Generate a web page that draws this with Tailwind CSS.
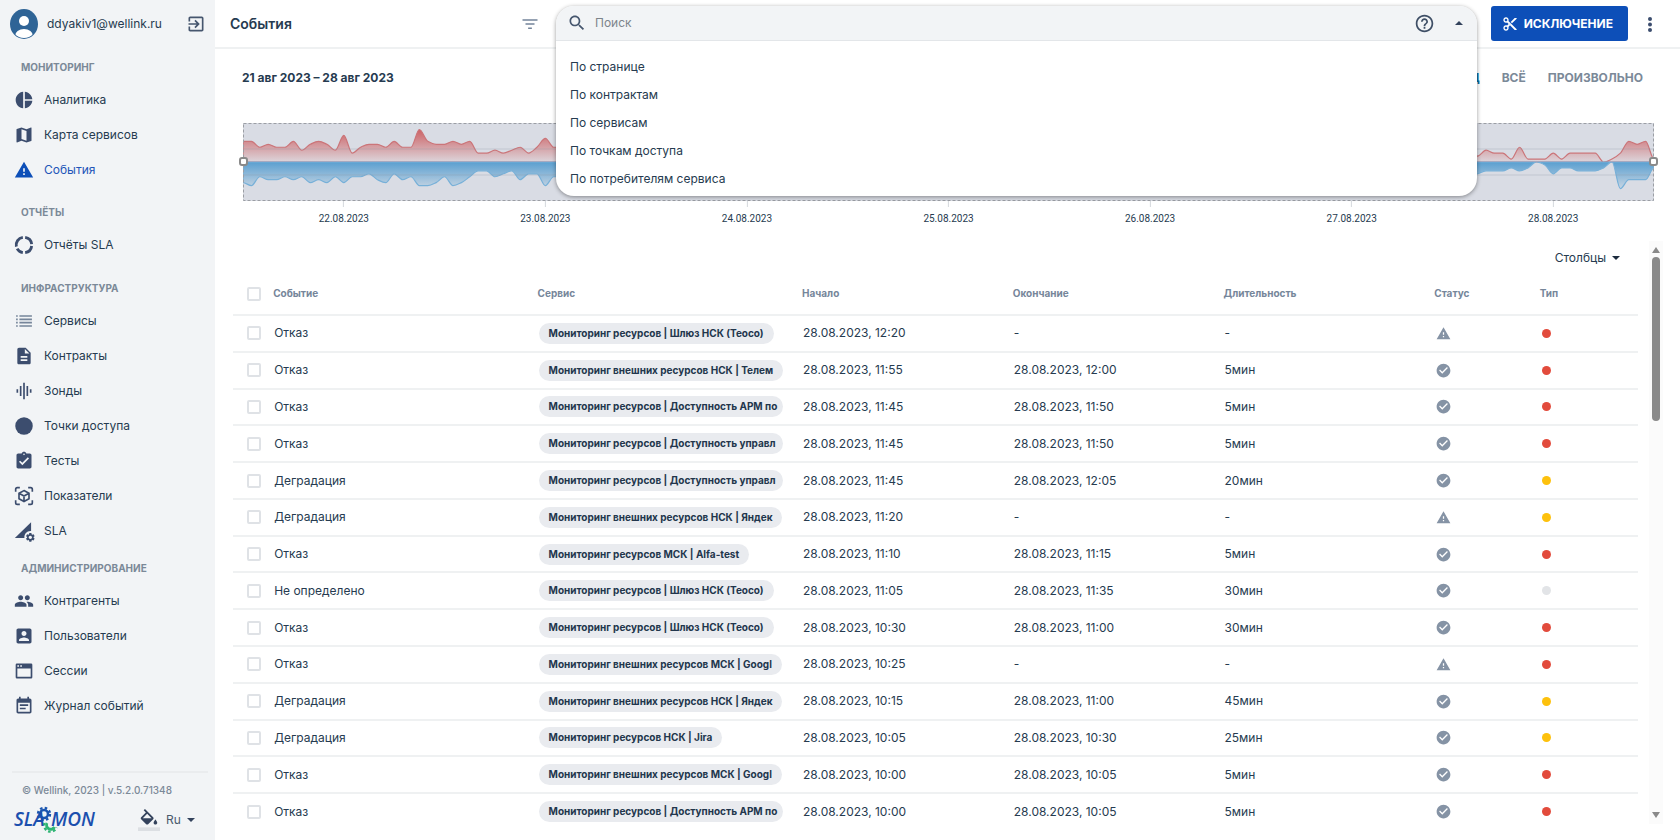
<!DOCTYPE html>
<html lang="ru">
<head>
    <meta charset="UTF-8">
    <meta name="viewport" content="width=device-width, initial-scale=1.0">
    <title>События</title>
    <script src="https://cdn.jsdelivr.net/npm/@tailwindcss/browser@4"></script>
</head>
<body class="bg-white text-[#263b50] text-xs font-['Inter','Noto_Sans',sans-serif]">

    <div class="flex h-screen overflow-hidden">

        <!-- Sidebar -->
        <aside class="w-[215px] shrink-0 bg-[#f2f4f6] flex flex-col">
            <div class="flex items-center h-12 pl-2.5 pr-[9px]">
                <svg class="w-7 h-[30px]" viewBox="0 0 28 30">
                    <defs><clipPath id="avatar"><ellipse cx="14" cy="15" rx="13" ry="14"/></clipPath></defs>
                    <ellipse cx="14" cy="15" rx="14" ry="15" fill="#2f6496"/>
                    <circle cx="14" cy="12" r="5" fill="#fff"/>
                    <ellipse cx="14" cy="27" rx="9" ry="7" fill="#fff" clip-path="url(#avatar)"/>
                </svg>
                <span class="ml-[9px]">ddyakiv1@wellink.ru</span>
                <button type="button" class="ml-auto" aria-label="Выйти">
                    <svg class="w-5 h-5 fill-[#46566e]" viewBox="0 0 24 24"><path d="M10.09 15.59L11.5 17l5-5-5-5-1.41 1.41L12.67 11H3v2h9.67l-2.58 2.59zM19 3H5c-1.11 0-2 .9-2 2v4h2V5h14v14H5v-4H3v4c0 1.1.89 2 2 2h14c1.1 0 2-.9 2-2V5c0-1.1-.9-2-2-2z"/></svg>
                </button>
            </div>

            <nav class="flex-1 pt-0.5">
                <h2 class="h-8 pt-[3px] flex items-center pl-[21px] text-[10px] font-bold text-[#7b8998]">МОНИТОРИНГ</h2>
                <a href="#" class="flex items-center gap-2.5 h-[35px] pl-3.5">
                    <svg class="w-5 h-5 fill-[#3c4d6e]" viewBox="0 0 24 24"><path d="M11 2v20c-5.07-.5-9-4.79-9-10s3.93-9.5 9-10zm2.03 0v8.99H22c-.47-4.74-4.24-8.52-8.97-8.99zm0 11.01V22c4.74-.47 8.5-4.25 8.97-8.99h-8.97z"/></svg>
                    Аналитика
                </a>
                <a href="#" class="flex items-center gap-2.5 h-[35px] pl-3.5">
                    <svg class="w-5 h-5 fill-[#3c4d6e]" viewBox="0 0 24 24"><path d="M20.5 3l-.16.03L15 5.1 9 3 3.36 4.9c-.21.07-.36.25-.36.48V20.5c0 .28.22.5.5.5l.16-.03L9 18.9l6 2.1 5.64-1.9c.21-.07.36-.25.36-.48V3.5c0-.28-.22-.5-.5-.5zM15 19l-6-2.11V5l6 2.11V19z"/></svg>
                    Карта сервисов
                </a>
                <a href="#" class="flex items-center gap-2.5 h-[35px] pl-3.5 text-[#2254b8]">
                    <svg class="w-5 h-5 fill-[#0d4fb8]" viewBox="0 0 24 24"><path d="M1 21h22L12 2 1 21zm12-3h-2v-2h2v2zm0-4h-2v-4h2v4z"/></svg>
                    События
                </a>

                <h2 class="h-8 mt-2 pt-[3px] flex items-center pl-[21px] text-[10px] font-bold text-[#7b8998]">ОТЧЁТЫ</h2>
                <a href="#" class="flex items-center gap-2.5 h-[35px] pl-3.5">
                    <svg class="w-5 h-5" viewBox="0 0 24 24" fill="none" stroke="#3c4d6e" stroke-width="3.4"><path d="M13.4 2.8A9.300 9.300 0 0 1 21.200 11M21.200 13.200A9.300 9.300 0 0 1 13.400 21.200M10.600 21.200A9.300 9.300 0 0 1 3.800 16.300M2.800 14A9.300 9.300 0 0 1 10.600 2.800"/></svg>
                    Отчёты SLA
                </a>

                <h2 class="h-8 mt-[9px] pt-[3px] flex items-center pl-[21px] text-[10px] font-bold text-[#7b8998]">ИНФРАСТРУКТУРА</h2>
                <a href="#" class="flex items-center gap-2.5 h-[35px] pl-3.5">
                    <svg class="w-5 h-5 fill-[#76859a]" viewBox="0 0 24 24"><path d="M2.500 5h2v2h-2zM6.500 5h15v2h-15zM2.500 9h2v2h-2zM6.500 9h15v2h-15zM2.500 13h2v2h-2zM6.500 13h15v2h-15zM2.500 17h2v2h-2zM6.500 17h15v2h-15z"/></svg>
                    Сервисы
                </a>
                <a href="#" class="flex items-center gap-2.5 h-[35px] pl-3.5">
                    <svg class="w-5 h-5 fill-[#3c4d6e]" viewBox="0 0 24 24"><path d="M14 2H6c-1.1 0-1.990.9-1.990 2L4 20c0 1.1.89 2 1.990 2H18c1.1 0 2-.9 2-2V8l-6-6zm2 16H8v-2h8v2zm0-4H8v-2h8v2zm-3-5V3.500L18.500 9H13z"/></svg>
                    Контракты
                </a>
                <a href="#" class="flex items-center gap-2.5 h-[35px] pl-3.5">
                    <svg class="w-5 h-5 fill-[#3c4d6e]" viewBox="0 0 24 24"><path d="M7 18h2V6H7v12zm4 4h2V2h-2v20zm-8-8h2v-4H3v4zm12 4h2V6h-2v12zm4-8v4h2v-4h-2z"/></svg>
                    Зонды
                </a>
                <a href="#" class="flex items-center gap-2.5 h-[35px] pl-3.5">
                    <svg class="w-5 h-5 fill-[#3c4d6e]" viewBox="0 0 24 24"><circle cx="12" cy="12" r="10.500"/></svg>
                    Точки доступа
                </a>
                <a href="#" class="flex items-center gap-2.5 h-[35px] pl-3.5">
                    <svg class="w-5 h-5 fill-[#3c4d6e]" viewBox="0 0 24 24"><path d="M19 3h-4.180C14.400 1.840 13.300 1 12 1c-1.300 0-2.400.84-2.820 2H5c-1.100 0-2 .9-2 2v14c0 1.100.9 2 2 2h14c1.100 0 2-.9 2-2V5c0-1.100-.9-2-2-2zm-7 0c.55 0 1 .45 1 1s-.45 1-1 1-1-.45-1-1 .45-1 1-1zm-2 14l-4-4 1.410-1.410L10 14.170l6.590-6.590L18 9l-8 8z"/></svg>
                    Тесты
                </a>
                <a href="#" class="flex items-center gap-2.5 h-[35px] pl-3.5">
                    <svg class="w-5 h-5" viewBox="0 0 24 24" fill="none" stroke="#3c4d6e" stroke-width="2"><path d="M2 7V4a2 2 0 0 1 2-2h3M17 2h3a2 2 0 0 1 2 2v3M22 17v3a2 2 0 0 1-2 2h-3M7 22H4a2 2 0 0 1-2-2v-3M12 5.500l6 3.300v6.600l-6 3.300-6-3.300V8.800zM6 8.800l6 3.300 6-3.300M12 12v6.500"/></svg>
                    Показатели
                </a>
                <a href="#" class="flex items-center gap-2.5 h-[35px] pl-3.5">
                    <svg class="w-5 h-5 fill-[#3c4d6e] overflow-visible" viewBox="0 0 24 24">
                        <path d="M20.500 1.500V12c-4.500-.6-8.500 3-8 8.500H1z"/>
                        <path transform="translate(13 13) scale(.55)" d="M19.140 12.940c.04-.3.06-.61.06-.94 0-.32-.02-.64-.07-.94l2.030-1.580c.18-.14.23-.41.12-.61l-1.920-3.320c-.12-.22-.37-.29-.59-.22l-2.390.96c-.5-.38-1.030-.7-1.620-.94l-.36-2.540c-.04-.24-.24-.41-.48-.41h-3.840c-.24 0-.43.17-.47.41l-.36 2.540c-.59.24-1.130.57-1.620.94l-2.390-.96c-.22-.08-.47 0-.59.22L2.740 8.870c-.12.21-.08.47.12.61l2.030 1.580c-.05.3-.09.63-.09.94s.02.64.07.94l-2.030 1.580c-.18.14-.23.41-.12.61l1.920 3.320c.12.22.37.29.59.22l2.390-.96c.5.38 1.030.7 1.620.94l.36 2.540c.05.24.24.41.48.41h3.840c.24 0 .44-.17.47-.41l.36-2.540c.59-.24 1.130-.56 1.620-.94l2.390.96c.22.08.47 0 .59-.22l1.920-3.320c.12-.22.07-.47-.12-.61l-2.010-1.580zM12 15.600c-1.980 0-3.600-1.620-3.600-3.600s1.620-3.600 3.600-3.600 3.600 1.620 3.600 3.600-1.620 3.600-3.600 3.600z"/>
                    </svg>
                    SLA
                </a>

                <h2 class="h-8 mt-[3px] pt-[3px] flex items-center pl-[21px] text-[10px] font-bold text-[#7b8998]">АДМИНИСТРИРОВАНИЕ</h2>
                <a href="#" class="flex items-center gap-2.5 h-[35px] pl-3.5">
                    <svg class="w-5 h-5 fill-[#3c4d6e]" viewBox="0 0 24 24"><path d="M16 11c1.660 0 2.990-1.340 2.990-3S17.660 5 16 5c-1.660 0-3 1.340-3 3s1.340 3 3 3zm-8 0c1.660 0 2.990-1.340 2.990-3S9.660 5 8 5C6.340 5 5 6.340 5 8s1.340 3 3 3zm0 2c-2.330 0-7 1.170-7 3.500V19h14v-2.500c0-2.330-4.670-3.500-7-3.500zm8 0c-.29 0-.62.02-.97.05 1.160.84 1.970 1.970 1.970 3.450V19h6v-2.500c0-2.330-4.670-3.500-7-3.500z"/></svg>
                    Контрагенты
                </a>
                <a href="#" class="flex items-center gap-2.5 h-[35px] pl-3.5">
                    <svg class="w-5 h-5 fill-[#3c4d6e]" viewBox="0 0 24 24"><path d="M3 5v14c0 1.100.89 2 2 2h14c1.100 0 2-.9 2-2V5c0-1.100-.9-2-2-2H5c-1.110 0-2 .9-2 2zm12 4c0 1.660-1.340 3-3 3s-3-1.340-3-3 1.340-3 3-3 3 1.340 3 3zm-9 8c0-2 4-3.100 6-3.100s6 1.100 6 3.100v1H6v-1z"/></svg>
                    Пользователи
                </a>
                <a href="#" class="flex items-center gap-2.5 h-[35px] pl-3.5">
                    <svg class="w-5 h-5" viewBox="0 0 24 24"><path fill="#3c4d6e" fill-rule="evenodd" d="M3.500 3h17A1.500 1.500 0 0 1 22 4.500v15a1.500 1.500 0 0 1-1.500 1.500h-17A1.500 1.500 0 0 1 2 19.500v-15A1.500 1.500 0 0 1 3.500 3zM4 9v10h16V9zM4 5v1.800h2V5zM7.500 5v1.800h2V5z"/></svg>
                    Сессии
                </a>
                <a href="#" class="flex items-center gap-2.5 h-[35px] pl-3.5">
                    <svg class="w-5 h-5 fill-[#3c4d6e]" viewBox="0 0 24 24"><path d="M17 10H7v2h10v-2zm2-7h-1V1h-2v2H8V1H6v2H5c-1.110 0-1.990.9-1.990 2L3 19c0 1.100.89 2 2 2h14c1.100 0 2-.9 2-2V5c0-1.100-.9-2-2-2zm0 16H5V8h14v11zm-5-5H7v2h7v-2z"/></svg>
                    Журнал событий
                </a>
            </nav>

            <div class="ml-3 mr-[7px] border-t-2 border-[#eaecee] h-[69px] pt-[9px]">
                <p class="pl-2.5 text-[10px] leading-4 font-medium text-[#7b8998]">© Wellink, 2023 | v.5.2.0.71348</p>
                <div class="flex items-center mt-2">
                    <svg class="w-[84px] h-7" viewBox="0 0 84 28" aria-label="SLA MON">
                        <g fill="none" stroke="#1b56b0">
                            <circle cx="32" cy="8" r="4" stroke-width="2.600"/>
                            <circle cx="32" cy="8" r="6" stroke-width="2.400" stroke-dasharray="2.500 2.210"/>
                        </g>
                        <g fill="none" stroke="#2fb574">
                            <path d="M35 17a4.200 4.200 0 1 0 7.500 4" stroke-width="2.800"/>
                            <path d="M32.600 17a6.300 6.300 0 1 0 12 4.500" stroke-width="2.400" stroke-dasharray="2.600 2.200"/>
                        </g>
                        <g font-family="Open Sans" font-style="italic" font-weight="600" font-size="19" fill="#1b4fae">
                            <text x="2" y="20">SLA</text>
                            <text x="39" y="20">MON</text>
                        </g>
                    </svg>
                    <button type="button" class="ml-[42px]" aria-label="Тема">
                        <svg class="w-[22px] h-[22px]" viewBox="0 0 24 24"><path fill="#33425c" d="M16.560 8.940L7.620 0 6.210 1.410l2.380 2.380-5.150 5.150c-.59.59-.59 1.540 0 2.120l5.500 5.500c.29.29.68.44 1.060.44s.77-.15 1.060-.44l5.500-5.500c.59-.58.59-1.530 0-2.120zM5.210 10L10 5.210 14.790 10H5.210zM19 11.500s-2 2.170-2 3.500c0 1.100.9 2 2 2s2-.9 2-2c0-1.330-2-3.500-2-3.500z"/><path fill="#dcdfe3" d="M0 20h24v4H0z"/></svg>
                    </button>
                    <button type="button" class="ml-1.5 flex items-center gap-1.5 text-[#4b5a6c]">Ru
                        <svg class="w-2 h-1" viewBox="0 0 8 4"><path fill="#33425c" d="M0 0h8L4 4z"/></svg>
                    </button>
                </div>
            </div>
        </aside>

        <main class="flex-1 min-w-0 flex flex-col">
            <!-- Top bar -->
            <header class="relative z-10 flex h-[49px] pt-1.5 border-b-2 border-[#eff1f2]">
                <div class="w-[341px] shrink-0 flex items-center h-[35px] pl-[15px] pr-[17px]">
                    <h1 class="text-sm font-semibold">События</h1>
                    <button type="button" class="ml-auto" aria-label="Фильтр">
                        <svg class="w-[18px] h-5 fill-[#74849a]" viewBox="0 0 24 24"><path d="M9.500 18.500h5v-2h-5v2zM2 5.500v2h20v-2H2zm4 7.500h12v-2H6v2z"/></svg>
                    </button>
                </div>

                <div class="relative flex-1 h-[35px]">
                    <div class="absolute inset-x-0 top-0 bg-white rounded-[18px] overflow-hidden shadow-[0_1px_4px_rgba(0,0,0,0.4)]">
                        <div class="flex items-center h-[35px] pl-[11px] pr-3.5 bg-[#f2f4f6] border-b border-[#e3e6e9]">
                            <svg class="w-5 h-5 fill-[#46566e]" viewBox="0 0 24 24"><path d="M15.500 14h-.79l-.28-.27C15.410 12.590 16 11.110 16 9.500 16 5.910 13.090 3 9.500 3S3 5.910 3 9.500 5.910 16 9.500 16c1.610 0 3.090-.59 4.230-1.570l.27.28v.79l5 4.990L20.490 19l-4.990-5zm-6 0C7.010 14 5 11.990 5 9.500S7.010 5 9.500 5 14 7.010 14 9.500 11.990 14 9.500 14z"/></svg>
                            <input type="text" aria-label="Поиск" placeholder="Поиск" class="flex-1 ml-2 bg-transparent outline-none placeholder:text-[#7d848b]">
                            <button type="button" aria-label="Справка">
                                <svg class="w-[21px] h-[21px] fill-[#3f4f66]" viewBox="0 0 24 24"><path d="M11 18h2v-2h-2v2zm1-16C6.480 2 2 6.480 2 12s4.480 10 10 10 10-4.480 10-10S17.520 2 12 2zm0 18c-4.410 0-8-3.590-8-8s3.590-8 8-8 8 3.590 8 8-3.590 8-8 8zm0-14c-2.210 0-4 1.790-4 4h2c0-1.100.9-2 2-2s2 .9 2 2c0 2-3 1.750-3 5h2c0-2.250 3-2.500 3-5 0-2.210-1.790-4-4-4z"/></svg>
                            </button>
                            <button type="button" class="ml-5" aria-label="Свернуть">
                                <svg class="w-2 h-1" viewBox="0 0 8 4"><path fill="#33425c" d="M0 4h8L4 0z"/></svg>
                            </button>
                        </div>
                        <ul class="pt-3 pb-[3px]">
                            <li><button type="button" class="w-full h-7 px-3.5 text-left">По странице</button></li>
                            <li><button type="button" class="w-full h-7 px-3.5 text-left">По контрактам</button></li>
                            <li><button type="button" class="w-full h-7 px-3.5 text-left">По сервисам</button></li>
                            <li><button type="button" class="w-full h-7 px-3.5 text-left">По точкам доступа</button></li>
                            <li><button type="button" class="w-full h-7 px-3.5 text-left">По потребителям сервиса</button></li>
                        </ul>
                    </div>
                </div>

                <button type="button" class="ml-3.5 h-[35px] pl-[11px] pr-[15px] flex items-center gap-1.5 rounded-[3px] bg-[#0d4fb8] text-white font-bold">
                    <svg class="w-4 h-4 fill-white" viewBox="0 0 24 24"><path d="M9.640 7.640c.23-.5.36-1.050.36-1.640 0-2.210-1.790-4-4-4S2 3.790 2 6s1.790 4 4 4c.59 0 1.140-.13 1.640-.36L10 12l-2.360 2.360C7.140 14.130 6.590 14 6 14c-2.210 0-4 1.790-4 4s1.790 4 4 4 4-1.790 4-4c0-.59-.13-1.140-.36-1.640L12 14l7 7h3v-1L9.640 7.640zM6 8c-1.100 0-2-.89-2-2s.9-2 2-2 2 .89 2 2-.9 2-2 2zm0 12c-1.100 0-2-.89-2-2s.9-2 2-2 2 .89 2 2-.9 2-2 2zm6-7.500c-.28 0-.5-.22-.5-.5s.22-.5.5-.5.5.22.5.5-.22.5-.5.5zM19 3l-6 6 2 2 7-7V3z"/></svg>
                    ИСКЛЮЧЕНИЕ
                </button>
                <button type="button" class="h-9 w-11 mr-2 flex items-center justify-center" aria-label="Ещё">
                    <svg class="w-1 h-[15px] fill-[#3c4d6e]" viewBox="0 0 4 15"><circle cx="2" cy="2" r="2"/><circle cx="2" cy="7.500" r="2"/><circle cx="2" cy="13" r="2"/></svg>
                </button>
            </header>

            <!-- Period -->
            <div class="flex items-center h-[58px] pl-[27px] pr-[37px]">
                <h2 class="font-bold">21 авг 2023 – 28 авг 2023</h2>
                <div class="ml-auto flex gap-[22px] font-bold text-[#7b8998]">
                    <button type="button" class="text-[#0d6a9b]">МЕСЯЦ</button>
                    <button type="button">ВСЁ</button>
                    <button type="button">ПРОИЗВОЛЬНО</button>
                </div>
            </div>

            <!-- Timeline -->
            <div class="relative mt-4 ml-7 mr-[26px]">
                <svg class="block w-full h-[78px] bg-[#d9dce4]" viewBox="0 0 1411 78" preserveAspectRatio="none">
                    <defs>
                        <linearGradient id="redFill" gradientUnits="userSpaceOnUse" x1="0" y1="5" x2="0" y2="39">
                            <stop offset="0" stop-color="#cc5c5f"/><stop offset="1" stop-color="#dcd5db"/>
                        </linearGradient>
                        <linearGradient id="blueFill" gradientUnits="userSpaceOnUse" x1="0" y1="39" x2="0" y2="66">
                            <stop offset="0" stop-color="#5a9fd0"/><stop offset="1" stop-color="#c9d6e3"/>
                        </linearGradient>
                    </defs>
                    <path id="redArea" fill="url(#redFill)" stroke="#cb7579" stroke-width="1.200"/>
                    <path id="blueArea" fill="url(#blueFill)" stroke="#77b0d8" stroke-width="1.200"/>
                    <path d="M0 26h1411M0 52h1411" stroke="#8d94a0" stroke-opacity=".3"/>
                    <rect x="0.500" y="0.500" width="1410" height="77" fill="none" stroke="#9b9ea4" stroke-dasharray="3 2"/>
                </svg>
                <span class="absolute -left-1 top-[34px] w-[9px] h-[9px] rounded-[3px] bg-white border-2 border-[#8a8a8a]"></span>
                <span class="absolute -right-1 top-[34px] w-[9px] h-[9px] rounded-[3px] bg-white border-2 border-[#8a8a8a]"></span>
                <div id="axis" class="relative h-10 text-[10px] font-[Roboto,sans-serif]"></div>
            </div>

            <!-- Events -->
            <div class="flex flex-1 min-h-0 mb-4 pl-[18px]">
                <div class="flex-1 min-w-0 overflow-hidden">
                    <div class="flex justify-end items-center h-[33px] pr-[18px]">
                        <button type="button" class="flex items-center gap-1.5">Столбцы
                            <svg class="w-2 h-1" viewBox="0 0 8 4"><path fill="#1c2b3e" d="M0 0h8L4 4z"/></svg>
                        </button>
                    </div>
                    <table class="table-fixed w-full h-[557px] border-collapse">
                        <thead>
                            <tr class="h-[41px] border-b-2 border-[#eff1f2] text-left text-[10px] text-[#76869a]">
                                <th class="pl-3.5"><input type="checkbox" aria-label="Выбрать все" class="block appearance-none w-3.5 h-3.5 rounded-xs border-2 border-[#dfe2e6] bg-white"></th>
                                <th class="w-3/16 pl-[5px] font-bold">Событие</th>
                                <th class="w-3/16 pl-1.5 font-bold">Сервис</th>
                                <th class="w-[15%] pl-[7px] font-bold">Начало</th>
                                <th class="w-[15%] pl-[7px] font-bold">Окончание</th>
                                <th class="w-[15%] pl-[7px] font-bold">Длительность</th>
                                <th class="w-[7.5%] pl-[7px] font-bold">Статус</th>
                                <th class="w-[7.5%] pl-[7px] font-bold">Тип</th>
                            </tr>
                        </thead>
                        <tbody id="events"></tbody>
                    </table>
                </div>
                <div class="flex flex-col items-center w-3.5 ml-[11px] mr-[17px] py-1.5 bg-[#fbfbfb]">
                    <svg class="w-2 h-1.5 shrink-0" viewBox="0 0 8 6"><path fill="#8a8a8a" d="M0 6h8L4 0z"/></svg>
                    <div class="w-2 h-[164px] mt-1 rounded-full bg-[#8a8a8a]"></div>
                    <svg class="w-2 h-1.5 shrink-0 mt-auto" viewBox="0 0 8 6"><path fill="#8a8a8a" d="M0 0h8L4 6z"/></svg>
                </div>
            </div>
        </main>
    </div>

    <script>
        const events = [
            ['Отказ', 'Мониторинг ресурсов | Шлюз НСК (Теосо)', '28.08.2023, 12:20', '-', '-', 'open', 'red'],
            ['Отказ', 'Мониторинг внешних ресурсов НСК | Телем', '28.08.2023, 11:55', '28.08.2023, 12:00', '5мин', 'done', 'red'],
            ['Отказ', 'Мониторинг ресурсов | Доступность АРМ по', '28.08.2023, 11:45', '28.08.2023, 11:50', '5мин', 'done', 'red'],
            ['Отказ', 'Мониторинг ресурсов | Доступность управл', '28.08.2023, 11:45', '28.08.2023, 11:50', '5мин', 'done', 'red'],
            ['Деградация', 'Мониторинг ресурсов | Доступность управл', '28.08.2023, 11:45', '28.08.2023, 12:05', '20мин', 'done', 'yellow'],
            ['Деградация', 'Мониторинг внешних ресурсов НСК | Яндек', '28.08.2023, 11:20', '-', '-', 'open', 'yellow'],
            ['Отказ', 'Мониторинг ресурсов МСК | Alfa-test', '28.08.2023, 11:10', '28.08.2023, 11:15', '5мин', 'done', 'red'],
            ['Не определено', 'Мониторинг ресурсов | Шлюз НСК (Теосо)', '28.08.2023, 11:05', '28.08.2023, 11:35', '30мин', 'done', 'gray'],
            ['Отказ', 'Мониторинг ресурсов | Шлюз НСК (Теосо)', '28.08.2023, 10:30', '28.08.2023, 11:00', '30мин', 'done', 'red'],
            ['Отказ', 'Мониторинг внешних ресурсов МСК | Googl', '28.08.2023, 10:25', '-', '-', 'open', 'red'],
            ['Деградация', 'Мониторинг внешних ресурсов НСК | Яндек', '28.08.2023, 10:15', '28.08.2023, 11:00', '45мин', 'done', 'yellow'],
            ['Деградация', 'Мониторинг ресурсов НСК | Jira', '28.08.2023, 10:05', '28.08.2023, 10:30', '25мин', 'done', 'yellow'],
            ['Отказ', 'Мониторинг внешних ресурсов МСК | Googl', '28.08.2023, 10:00', '28.08.2023, 10:05', '5мин', 'done', 'red'],
            ['Отказ', 'Мониторинг ресурсов | Доступность АРМ по', '28.08.2023, 10:00', '28.08.2023, 10:05', '5мин', 'done', 'red']
        ];

        const statusIcons = {
            open: 'M1 21h22L12 2 1 21zm12-3h-2v-2h2v2zm0-4h-2v-4h2v4z',
            done: 'M12 1C5.900 1 1 5.900 1 12s4.900 11 11 11 11-4.900 11-11S18.100 1 12 1zm-2 16l-5-5 1.410-1.410L10 14.170l7.590-7.590L19 8l-9 9z'
        };
        const typeColors = { red: 'bg-[#e24b3c]', yellow: 'bg-[#fdc10d]', gray: 'bg-[#e2e4e7]' };

        document.getElementById('events').innerHTML = events.map(([name, service, start, end, duration, status, type]) => `
            <tr class="border-b-2 border-[#eff1f2]">
                <td class="pl-3.5"><input type="checkbox" aria-label="${name}" class="block appearance-none w-3.5 h-3.5 rounded-xs border-2 border-[#dfe2e6] bg-white"></td>
                <td class="pl-1.5">${name}</td>
                <td class="pl-[7px] pr-3"><span class="block w-fit max-w-full h-[21px] leading-[21px] px-2.5 rounded-full overflow-hidden whitespace-nowrap bg-[#e9ebef] text-[10px] font-bold text-[#22364c]">${service}</span></td>
                <td class="pl-2">${start}</td>
                <td class="pl-2">${end}</td>
                <td class="pl-2">${duration}</td>
                <td class="pl-[9px]"><svg class="w-[15px] h-[15px] fill-[#8593a5]" viewBox="0 0 24 24"><path d="${statusIcons[status]}"/></svg></td>
                <td class="pl-[9px]"><span class="block w-[9px] h-[9px] rounded-full ${typeColors[type]}"></span></td>
            </tr>`).join('');

        // hourly counters, 21.08 12:00 - 28.08 12:00
        const red = [7,7,5,6,5,5,7,4,6,7,6,4,9,3,5,6,6,5,7,5,5,11,7,6,6,7,6,7,3,3,4,3,4,5,3,5,8,5];
        const blue = [7,8,5,6,6,5,6,5,7,6,7,5,7,5,5,4,6,7,4,6,5,8,8,7,5,8,7,5,3,3,5,4,3,6,4,4,8,5];
        while (red.length < 147) {
            red.push(3 + red.length % 3);
            blue.push(3 + blue.length % 4);
        }
        red.push(2,4,3,3,1,5,1,1,1,3,1,3,3,3,3,0,1,3,7,6,7,1);
        blue.push(4,3,3,3,2,3,2,0,1,4,2,2,3,3,3,2,0,9,6,6,6,2);

        function areaPath(values, sign) {
            const step = 1411 / (values.length - 1);
            const pts = values.map((v, i) => [i * step, 39 - sign * v * 2.95]);
            // flat tangent at local extremes keeps the curve inside the data
            const slope = pts.map((p, i) => {
                if (i === 0 || i === pts.length - 1) return 0;
                const a = (p[1] - pts[i - 1][1]) / step;
                const b = (pts[i + 1][1] - p[1]) / step;
                return a * b <= 0 ? 0 : 2 * a * b / (a + b);
            });
            let d = `M0 39L0 ${pts[0][1]}`;
            for (let i = 1; i < pts.length; i++) {
                const [x0, y0] = pts[i - 1];
                const [x1, y1] = pts[i];
                d += `C${x0 + step / 3} ${y0 + slope[i - 1] * step / 3} ${x1 - step / 3} ${y1 - slope[i] * step / 3} ${x1} ${y1}`;
            }
            return d + 'L1411 39Z';
        }
        document.getElementById('redArea').setAttribute('d', areaPath(red, 1));
        document.getElementById('blueArea').setAttribute('d', areaPath(blue, -1));

        document.getElementById('axis').innerHTML = [22, 23, 24, 25, 26, 27, 28].map((day, i) => `
            <div class="absolute top-0 -translate-x-1/2 flex flex-col items-center" style="left:${(12 + i * 24) / 168 * 100}%">
                <span class="w-px h-1.5 bg-[#d5d8dc]"></span>
                <span class="mt-1 leading-4">${day}.08.2023</span>
            </div>`).join('');
    </script>
</body>
</html>
